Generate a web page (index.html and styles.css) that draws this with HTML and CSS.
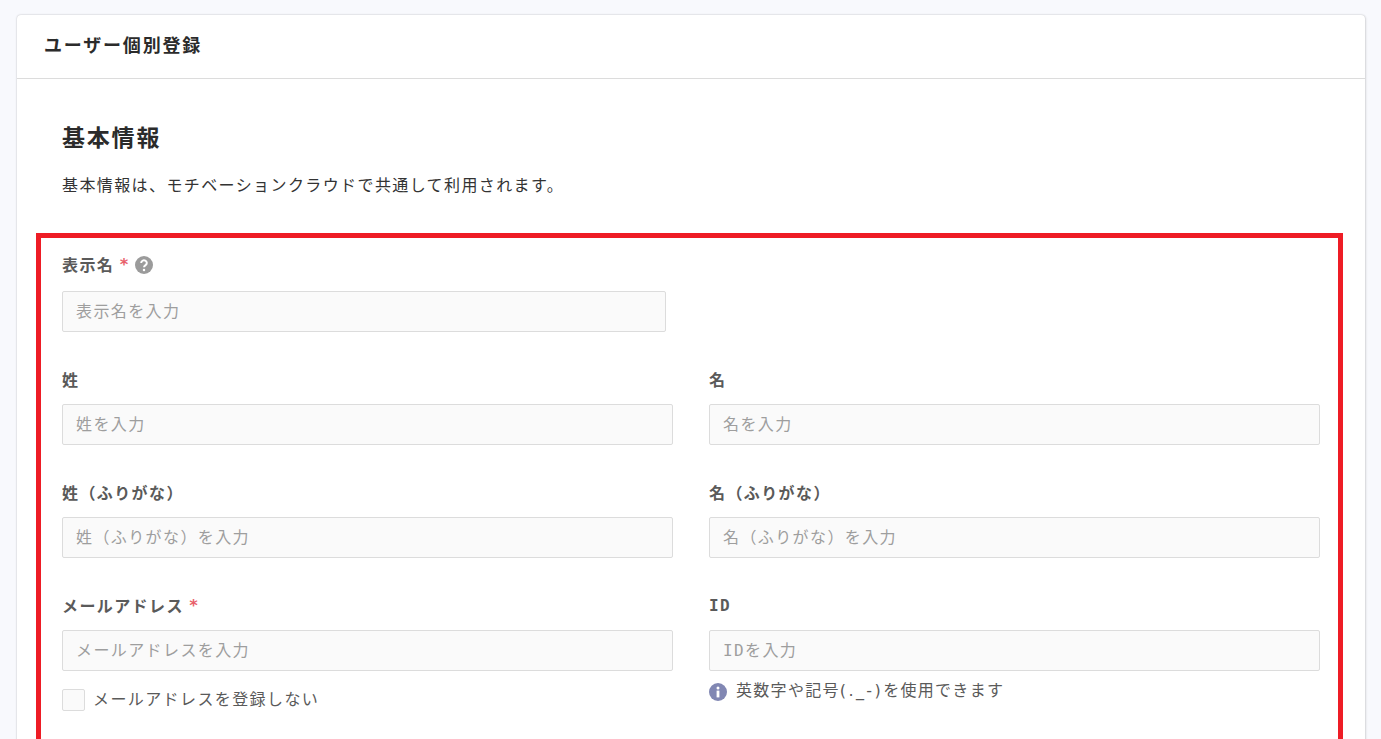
FILE: index.html
```html
<!DOCTYPE html>
<html lang="ja">
<head>
<meta charset="utf-8">
<title>ユーザー個別登録</title>
<link rel="stylesheet" href="styles.css">
</head>
<body>
<main class="card">
  <header class="card-header">ユーザー個別登録</header>
  <div class="card-body">
    <h2 class="section-title">基本情報</h2>
    <p class="section-desc">基本情報は、モチベーションクラウドで共通して利用されます。</p>
    <form class="highlight">
      <div class="field field-single">
        <div class="label label-help">表示名<span class="req">*</span>
          <svg class="help" width="18" height="18" viewBox="0 0 18 18"><circle cx="9" cy="9" r="9" fill="#9b9b9b"/><path d="M6.2 7a2.8 2.6 0 1 1 4.4 2.1c-1 .7-1.6 1.1-1.6 2.2" fill="none" stroke="#fff" stroke-width="2"/><circle cx="9" cy="14" r="1.25" fill="#fff"/></svg>
        </div>
        <input class="input" placeholder="表示名を入力">
      </div>
      <div class="grid">
        <div class="field"><div class="label">姓</div><input class="input" placeholder="姓を入力"></div>
        <div class="field"><div class="label">名</div><input class="input" placeholder="名を入力"></div>
        <div class="field"><div class="label">姓（ふりがな）</div><input class="input" placeholder="姓（ふりがな）を入力"></div>
        <div class="field"><div class="label">名（ふりがな）</div><input class="input" placeholder="名（ふりがな）を入力"></div>
        <div class="field">
          <div class="label">メールアドレス<span class="req">*</span></div>
          <input class="input" placeholder="メールアドレスを入力">
          <label class="check"><span class="box"></span>メールアドレスを登録しない</label>
        </div>
        <div class="field">
          <div class="label">ID</div>
          <input class="input" placeholder="IDを入力">
          <div class="hint">
            <svg class="hint-icon" width="18" height="18" viewBox="0 0 18 18"><circle cx="9" cy="9" r="9" fill="#8187b3"/><circle cx="9" cy="5" r="1.5" fill="#fff"/><rect x="7.6" y="7.6" width="2.8" height="6.8" fill="#fff"/></svg>
            <span>英数字や記号<span class="sym">(._-)</span>を使用できます</span>
          </div>
        </div>
      </div>
    </form>
  </div>
</main>
</body>
</html>
```

FILE: styles.css
```css
* { box-sizing: border-box; }
html, body { height: 739px; overflow: hidden; }
body {
  margin: 0;
  padding: 15px 16px 0 17px;
  background: #f8f9fd;
  color: #333;
  font-family: "DejaVu Sans Mono", "Noto Sans CJK JP", sans-serif;
  font-size: 16px;
  letter-spacing: 1.4px;
}
.card {
  background: #fff;
  border-radius: 4px;
  height: 1000px;
  box-shadow: 0 0 2px rgba(0, 0, 0, .25), 1px 1px 3px rgba(0, 0, 0, .08);
}
.card-header {
  height: 64px;
  padding: 0 27px 5px;
  display: flex;
  align-items: center;
  border-bottom: 1px solid #dcdcdc;
  font-size: 18px;
  font-weight: 700;
  letter-spacing: 1.8px;
  color: #2b2b2b;
}
.card-body { padding: 42px 22px 0 19px; }
.section-title {
  margin: 0 0 0 26px;
  font-size: 23px;
  line-height: 34px;
  font-weight: 700;
  letter-spacing: 1.8px;
  color: #2b2b2b;
}
.section-desc {
  margin: 19px 0 0 26px;
  font-size: 16px;
  line-height: 24px;
  color: #333;
}
.highlight {
  margin-top: 35px;
  padding: 14px 18px 0 21px;
  border: 5px solid #ee1c25;
  height: 700px;
}
.field-single { width: 604px; margin-bottom: 35px; }
.grid {
  display: grid;
  grid-template-columns: 611px 611px;
  column-gap: 36px;
  row-gap: 35px;
}
.label {
  display: flex;
  align-items: center;
  height: 24px;
  margin-bottom: 13px;
  font-size: 16px;
  font-weight: 700;
  color: #5a5a5a;
}
.label-help { margin-bottom: 15px; }
.req { color: #e8606a; margin-left: 5px; }
.help { margin: 1px 0 0 5px; }
.input {
  display: block;
  width: 100%;
  height: 41px;
  padding: 0 13px;
  background: #fafafa;
  border: 1px solid #dcdcdc;
  border-radius: 2px;
  font-family: inherit;
  font-size: 16px;
  letter-spacing: inherit;
  outline: none;
}
.input::placeholder { color: #9e9e9e; opacity: 1; }
.check {
  display: flex;
  align-items: center;
  gap: 8px;
  margin-top: 18px;
  color: #5a5a5a;
  font-size: 16px;
  line-height: 22px;
}
.box {
  width: 23px;
  height: 22px;
  background: #fafafa;
  border: 1px solid #dcdcdc;
  border-radius: 2px;
}
.hint {
  display: flex;
  align-items: flex-start;
  gap: 9px;
  margin-top: 8px;
  color: #5a5a5a;
  font-size: 16px;
  line-height: 23px;
  letter-spacing: 1.3px;
}
.hint-icon { margin-top: 4px; }
.sym {
  font-family: "DejaVu Sans", sans-serif;
  letter-spacing: 2.4px;
}
```
